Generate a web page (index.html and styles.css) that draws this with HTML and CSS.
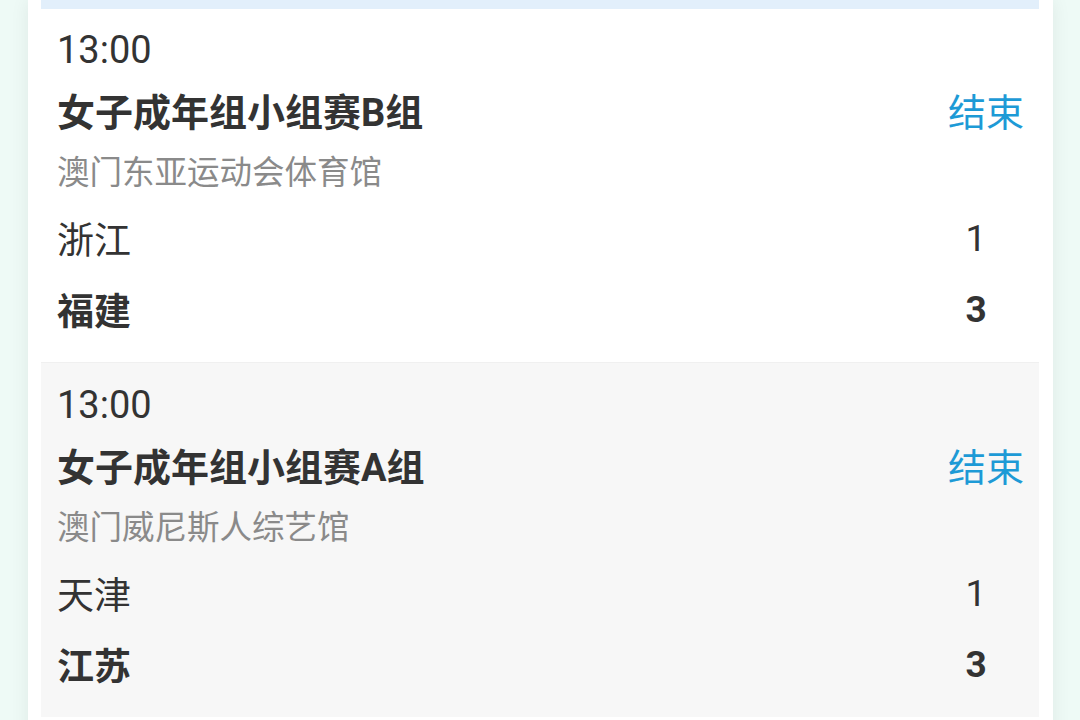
FILE: index.html
```html
<!DOCTYPE html>
<html lang="zh-CN">
<head>
  <meta charset="UTF-8">
  <meta name="viewport" content="width=device-width, initial-scale=1.0">
  <title>赛程</title>
  <link rel="stylesheet" href="styles.css">
</head>
<body>
  <div class="card">
    <!-- 日期栏（已滚出屏幕） -->
    <div class="date-bar"></div>

    <!-- 比赛 1 -->
    <div class="match">
      <div class="match-time">13:00</div>
      <div class="match-head">
        <span class="match-title">女子成年组小组赛B组</span>
        <span class="match-status">结束</span>
      </div>
      <div class="match-venue">澳门东亚运动会体育馆</div>
      <div class="team">
        <span class="team-name">浙江</span>
        <span class="team-score">1</span>
      </div>
      <div class="team winner">
        <span class="team-name">福建</span>
        <span class="team-score">3</span>
      </div>
    </div>

    <!-- 比赛 2 -->
    <div class="match alt">
      <div class="match-time">13:00</div>
      <div class="match-head">
        <span class="match-title">女子成年组小组赛A组</span>
        <span class="match-status">结束</span>
      </div>
      <div class="match-venue">澳门威尼斯人综艺馆</div>
      <div class="team">
        <span class="team-name">天津</span>
        <span class="team-score">1</span>
      </div>
      <div class="team winner">
        <span class="team-name">江苏</span>
        <span class="team-score">3</span>
      </div>
    </div>
  </div>
</body>
</html>
```

FILE: styles.css
```css
/* ベース */
body {
  margin: 0;
  background-color: #eefaf6;
  font-family: Roboto, "Noto Sans CJK SC", sans-serif;
  color: #333;
  overflow: hidden;
}

/* カード */
.card {
  margin: 0 27px 0 28px;
  padding: 0 14px 20px 13px;
  background-color: #fff;
  box-shadow: 0 0 18px rgba(0, 0, 0, 0.07);
  min-height: 760px;
}

.date-bar {
  height: 9px;
  background-color: #e2effb;
}

/* 試合 */
.match {
  padding: 18px 15px 23px 16px;
  background-color: #fff;
}
.match.alt {
  background-color: #f7f7f7;
  border-top: 1px solid #f0f0f0;
  padding-top: 19px;
}

.match-time {
  font-size: 38px;
  line-height: 46px;
}

.match-head {
  display: flex;
  justify-content: space-between;
  align-items: center;
  margin-top: 8px;
  height: 56px;
}
.match-title {
  font-size: 38px;
  font-weight: bold;
}
.match-status {
  font-size: 38px;
  color: #1d9ad6;
}

.match-venue {
  margin-top: 14px;
  font-size: 32.5px;
  line-height: 44px;
  color: #8a8a8a;
}

.team {
  display: flex;
  justify-content: space-between;
  align-items: center;
  height: 60px;
  margin-top: 13px;
  font-size: 37px;
}
.team + .team {
  margin-top: 11px;
}
.team.winner {
  font-weight: bold;
}
.team-score {
  width: 50px;
  margin-right: 23px;
  text-align: center;
}
```
